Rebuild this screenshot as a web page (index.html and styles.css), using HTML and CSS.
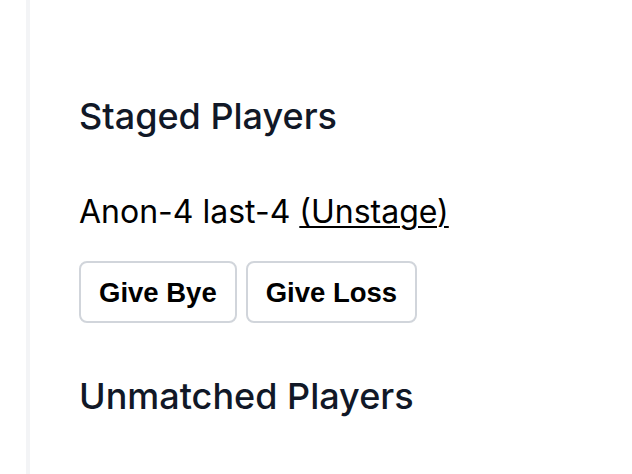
FILE: index.html
```html
<!DOCTYPE html>
<html>
<head>
<meta charset="utf-8">
<link rel="stylesheet" href="styles.css">
</head>
<body>
<div class="page">
  <section class="staged">
    <h2 class="title">Staged Players</h2>
    <p class="player">Anon-4 last-4 <a class="unstage" href="#">(Unstage)</a></p>
    <div class="actions">
      <button class="btn">Give Bye</button>
      <button class="btn">Give Loss</button>
    </div>
  </section>
  <h2 class="title">Unmatched Players</h2>
</div>
</body>
</html>
```
FILE: styles.css
```css
html, body {
  margin: 0;
  padding: 0;
  background: #fff;
}
.page {
  margin-left: 26px;
  border-left: 4px solid #f3f4f6;
  min-height: 474px;
  padding: 88px 48px 0 49px;
  box-sizing: border-box;
  font-family: Inter, "Noto Sans", sans-serif;
}
.title {
  margin: 0;
  font-size: 36px;
  line-height: 56px;
  font-weight: 500;
  color: #111827;
}
.player {
  margin: 44px 0 0;
  font-size: 32px;
  line-height: 48px;
  color: #000;
}
.unstage {
  color: #000;
  text-decoration: underline;
  text-decoration-thickness: 2px;
  text-underline-offset: 3px;
}
.actions {
  display: flex;
  gap: 9px;
  margin-top: 25px;
  margin-bottom: 45px;
}
.btn {
  font-family: "Liberation Sans", Arial, sans-serif;
  font-weight: 700;
  font-size: 27.5px;
  color: #000;
  background: #fff;
  border: 2px solid #d1d5db;
  border-radius: 8px;
  height: 62px;
  padding: 2px 18px 0;
}
```
